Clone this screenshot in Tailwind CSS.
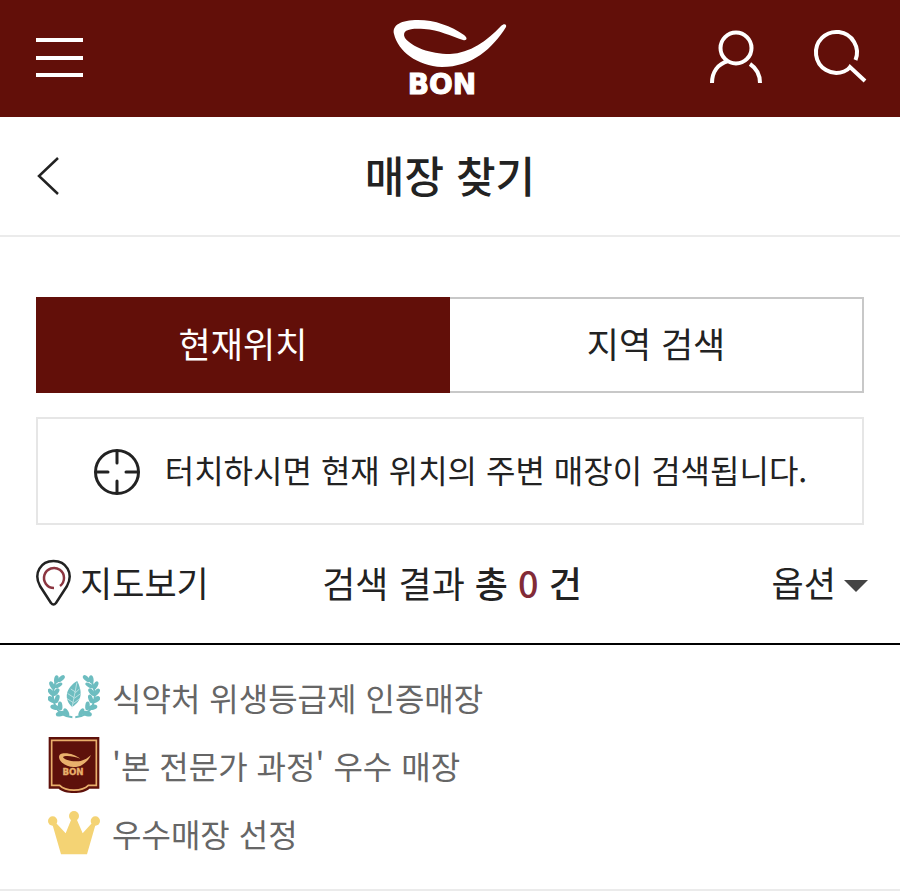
<!DOCTYPE html>
<html lang="ko">
<head>
  <meta charset="UTF-8">
  <meta name="viewport" content="width=device-width, initial-scale=1.0">
  <title>매장 찾기 | BON</title>
  <script src="https://cdn.jsdelivr.net/npm/@tailwindcss/browser@4"></script>
</head>
<body class="min-h-screen bg-white font-['Noto_Sans_CJK_KR',sans-serif] text-[#222]">
  <header class="grid h-[117px] grid-cols-[1fr_auto_1fr] items-center bg-[#620f09] px-8 text-white">
    <button type="button" aria-label="메뉴" class="justify-self-start">
      <svg class="h-14 w-14" viewBox="0 0 56 56" stroke="currentColor" stroke-width="4">
        <path d="M4 9H51M4 27H51M4 44H51"/>
      </svg>
    </button>
    <a href="#" aria-label="BON">
      <svg class="h-21 w-30" viewBox="0 -2 120 84" fill="currentColor">
        <path d="M73 21C77 22 78 19 74 16C61 7 45 1 28 1C11 1 2 6 4 15C8 32 27 47 52 48C82 48 103 29 116 8C117 5 114 4 111 7C97 22 80 34 60 35C40 35 22 28 15 19C11 11 20 9 34 10C49 11 61 17 73 21Z"/>
        <text x="52" y="75" text-anchor="middle" font-family="DejaVu Sans" font-weight="700" font-size="28" stroke="currentColor">BON</text>
      </svg>
    </a>
    <div class="flex gap-12 justify-self-end">
      <button type="button" aria-label="마이페이지">
        <svg class="h-14 w-14 overflow-visible" viewBox="0 0 56 56" fill="none" stroke="currentColor" stroke-width="4">
          <circle cx="28" cy="17" r="15.500"/>
          <path d="M4 52C4 41 10 33 20 30M42 33C48 37 52 43 52 52"/>
        </svg>
      </button>
      <button type="button" aria-label="검색">
        <svg class="h-14 w-14 overflow-visible" viewBox="0 0 56 56" fill="none" stroke="currentColor" stroke-width="4">
          <path d="M43.500 29A20.500 20.500 0 1 0 32 40.500Q36 39 38 36L53 50"/>
        </svg>
      </button>
    </div>
  </header>

  <div class="grid h-30 grid-cols-[1fr_auto_1fr] items-center border-b-2 border-[#ebebeb] px-9">
    <a href="#" aria-label="뒤로">
      <svg class="h-10 w-6" viewBox="0 0 24 40" fill="none" stroke="currentColor" stroke-width="2.500">
        <path d="M22 2L3 20L22 38"/>
      </svg>
    </a>
    <h1 class="pb-1 text-[43px] font-medium">매장 찾기</h1>
  </div>

  <main>
    <div class="px-9 pt-15">
      <div class="grid h-24 grid-cols-2 text-[35px]">
        <button type="button" class="bg-[#620f09] pb-1 text-white">현재위치</button>
        <button type="button" class="border-2 border-l-0 border-[#c8c8c8] pb-1">지역 검색</button>
      </div>
      <button type="button" class="mt-6 flex h-27 w-full items-center justify-center gap-6 border-2 border-[#e6e6e6] text-[32px]">
        <svg class="h-12 w-12" viewBox="0 0 48 48" fill="none" stroke="currentColor" stroke-width="3" stroke-linecap="round">
          <circle cx="24" cy="25" r="21.500"/>
          <path d="M24 4V16M24 34V46M3 25H15M33 25H45"/>
        </svg>
        <span class="pb-1">터치하시면 현재 위치의 주변 매장이 검색됩니다.</span>
      </button>
    </div>

    <div class="grid h-30 grid-cols-[1fr_auto_1fr] items-center border-b-2 border-black pr-8 pb-1 pl-9">
      <button type="button" class="flex items-center gap-2 justify-self-start text-[35px]">
        <svg class="h-12 w-9" viewBox="0 0 36 48" fill="none" stroke="currentColor" stroke-width="2.500">
          <path d="M15 45L4 28C-3 15 5 3 17.500 3C30 3 38 15 31 28L20 45Q17.500 48 15 45Z"/>
          <path class="stroke-[#8b3540]" d="M18 30A10 10 0 1 1 24 28"/>
        </svg>
        지도보기
      </button>
      <p class="text-[36px]">검색 결과 <strong class="font-medium">총 <span class="text-[#822b37]">0</span> 건</strong></p>
      <button type="button" class="flex items-center gap-2 justify-self-end text-[35px]">
        옵션
        <svg class="mt-2 h-3 w-6" viewBox="0 0 24 12"><path d="M0 0H24L12 12Z" fill="#444"/></svg>
      </button>
    </div>

    <ul class="flex flex-col gap-5 border-b-2 border-[#ebebeb] px-12 pt-7 pb-8 text-[32px] text-[#666]">
      <li class="flex h-12 items-center gap-3">
        <!-- laurel wreath -->
        <svg class="h-12 w-13" viewBox="24 38 162 140" fill="#6dbdc0">
          <defs>
            <g id="branch">
              <path d="M100 171C52 167 24 120 48 61" fill="none" stroke="#6dbdc0" stroke-width="6"/>
              <ellipse cx="50" cy="53" rx="7" ry="13" transform="rotate(8 50 53)"/>
              <ellipse cx="65" cy="51" rx="7" ry="14" transform="rotate(48 65 51)"/>
              <ellipse cx="37" cy="72" rx="7" ry="14" transform="rotate(-28 37 72)"/>
              <ellipse cx="56" cy="72" rx="6" ry="14" transform="rotate(62 56 72)"/>
              <ellipse cx="33" cy="93" rx="7" ry="13" transform="rotate(-38 33 93)"/>
              <ellipse cx="49" cy="93" rx="7" ry="14" transform="rotate(40 49 93)"/>
              <ellipse cx="34" cy="116" rx="8" ry="13" transform="rotate(-52 34 116)"/>
              <ellipse cx="52" cy="114" rx="7" ry="14" transform="rotate(20 52 114)"/>
              <ellipse cx="45" cy="140" rx="8" ry="14" transform="rotate(-75 45 140)"/>
              <ellipse cx="62" cy="136" rx="7" ry="14" transform="rotate(-5 62 136)"/>
              <ellipse cx="63" cy="160" rx="8" ry="15" transform="rotate(-105 63 160)"/>
              <ellipse cx="81" cy="156" rx="7" ry="14" transform="rotate(-28 81 156)"/>
            </g>
          </defs>
          <use href="#branch"/>
          <use href="#branch" transform="matrix(-1 0 0 1 209 0)"/>
          <path d="M115 58C130 88 133 118 99 139C73 116 77 80 115 58Z"/>
          <path d="M114 63L98 146M109 92L95 83M105 110L85 97M102 125L83 113M109 95L122 83M106 112L125 98M103 128L125 112" fill="none" stroke="#e3f3f3" stroke-width="2"/>
        </svg>
        식약처 위생등급제 인증매장
      </li>
      <li class="flex h-12 items-center gap-3">
        <!-- badge -->
        <svg class="h-14 w-13" viewBox="0 0 156 168">
          <path d="M2 0H154V155H124C110 172 46 172 32 155H2Z" fill="#5e110b"/>
          <path d="M11 10H145V145H121C103 164 53 164 35 145H11Z" fill="none" stroke="#e9b06c" stroke-width="5"/>
          <path d="M97 65C83 54 62 47 46 49C28 51 31 66 41 76C57 92 85 94 102 84C114 77 124 66 129 54C117 66 101 74 83 73C64 73 49 67 45 61C46 55 73 55 97 65Z" fill="#e9b06c"/>
          <text x="75" y="115" text-anchor="middle" font-family="DejaVu Sans" font-weight="700" font-size="26" fill="#e9b06c" stroke="#e9b06c">BON</text>
        </svg>
        '본 전문가 과정' 우수 매장
      </li>
      <li class="flex h-12 items-center gap-3">
        <!-- crown -->
        <svg class="h-11 w-13" viewBox="0 0 156 132" fill="#f4d374">
          <circle cx="14" cy="30" r="14"/>
          <circle cx="78" cy="15" r="15"/>
          <circle cx="142" cy="30" r="14"/>
          <path d="M12 36L22 34L53 67L70 25H86L104 67L134 34L144 36L117 130H39Z"/>
        </svg>
        우수매장 선정
      </li>
    </ul>
  </main>
</body>
</html>
